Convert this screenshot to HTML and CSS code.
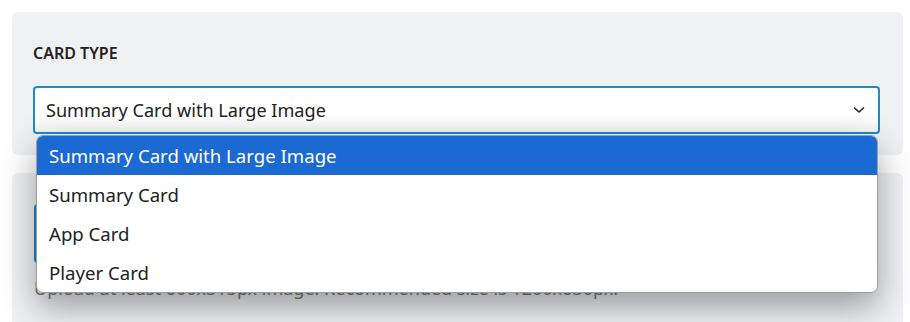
FILE: index.html
```html
<!DOCTYPE html>
<html lang="en">
<head>
    <meta charset="UTF-8">
    <meta name="viewport" content="width=device-width, initial-scale=1.0">
    <title>Card Settings</title>
    <link rel="stylesheet" href="styles.css">
</head>
<body>
    <div class="settings">
        <section class="panel">
            <label class="field-label" for="cardType">Card Type</label>
            <div class="select-wrap">
                <div class="select" id="cardType">
                    <span>Summary Card with Large Image</span>
                    <svg class="chevron" width="12" height="8" viewBox="0 0 12 8">
                        <path d="M1 1.5 L6 6 L11 1.5" fill="none" stroke="#222" stroke-width="1.6"/>
                    </svg>
                </div>
                <ul class="options">
                    <li class="selected">Summary Card with Large Image</li>
                    <li>Summary Card</li>
                    <li>App Card</li>
                    <li>Player Card</li>
                </ul>
            </div>
        </section>
        <section class="panel panel-image">
            <div class="dropzone"></div>
            <p class="hint">Upload at least 600x315px image. Recommended size is 1200x630px.</p>
        </section>
    </div>
</body>
</html>
```

FILE: styles.css
```css
body {
    font-family: 'Noto Sans', 'Open Sans', sans-serif;
    background-color: #fff;
    margin: 0;
    padding: 12px 7px 12px 12px;
    color: #222;
    overflow: hidden;
}
.settings {
    display: flex;
    flex-direction: column;
    gap: 18px;
}
.panel {
    background-color: #f0f1f3;
    border-radius: 6px;
    padding: 30px 23px 21px 21px;
}
.field-label {
    display: block;
    font-size: 16px;
    font-weight: 600;
    text-transform: uppercase;
    line-height: 22px;
    margin-bottom: 22px;
}
.select-wrap {
    position: relative;
}
.select {
    display: flex;
    align-items: center;
    justify-content: space-between;
    height: 44px;
    padding: 0 13px 0 11px;
    border: 2px solid #1a8ad1;
    border-radius: 4px;
    background: linear-gradient(#fff 60%, #f3f3f3);
    font-size: 18.1px;
}
.options {
    position: absolute;
    top: 49px;
    left: 3px;
    right: 2px;
    margin: 0;
    padding: 0;
    list-style: none;
    background-color: #fff;
    border: 1px solid #9d9d9d;
    border-radius: 7px;
    overflow: hidden;
    box-shadow: 0 14px 34px rgba(0, 0, 0, 0.36);
    z-index: 2;
}
.options li {
    height: 39px;
    line-height: 39px;
    padding: 0 12px;
    font-size: 18.6px;
}
.options li.selected {
    background-color: #1b69d3;
    color: #fff;
}
.panel-image {
    padding: 31px 23px 40px 22px;
}
.dropzone {
    width: 60%;
    height: 55px;
    border: 2px solid #1a8ad1;
    border-radius: 4px;
    background-color: #fff;
}
.hint {
    margin: 12px 0 0;
    font-size: 18px;
    line-height: 26px;
    color: #777;
}
```
